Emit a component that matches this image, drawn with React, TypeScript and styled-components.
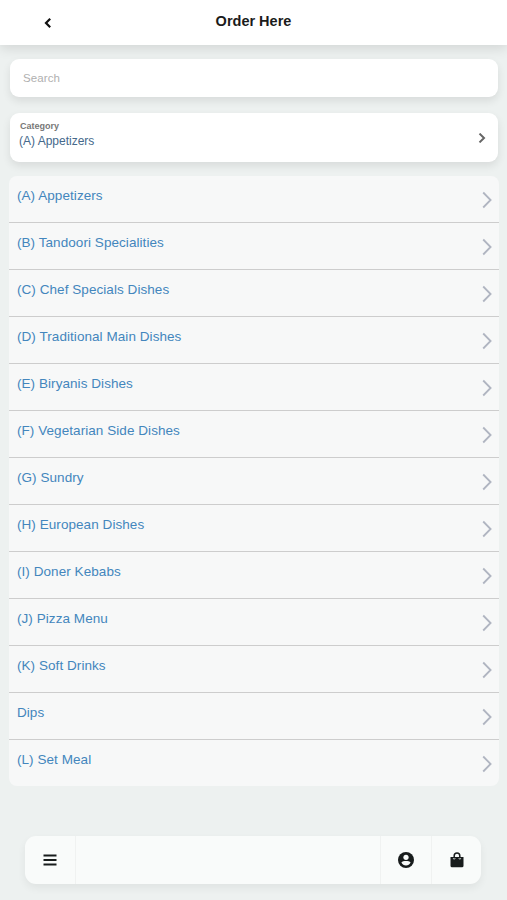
import React from "react";
import styled, { createGlobalStyle } from "styled-components";

const GlobalStyle = createGlobalStyle`
  * { box-sizing: border-box; }
  body {
    margin: 0;
    background: #edf1f0;
    font-family: "Liberation Sans", Arial, sans-serif;
  }
  button { font-family: inherit; border: 0; background: none; padding: 0; margin: 0; }
`;

const Page = styled.div`
  width: 100%;
  max-width: 507px;
  height: 900px;
  display: flex;
  flex-direction: column;
  overflow: hidden;
`;

const Header = styled.header`
  flex: none;
  height: 45px;
  display: grid;
  grid-template-columns: 96px 1fr 96px;
  align-items: center;
  background: #fff;
  box-shadow: 0 3px 12px rgba(0, 0, 0, 0.12);
`;

const BackButton = styled.button`
  display: flex;
  justify-content: center;
  color: #111;
`;

const Title = styled.h1`
  margin: 0;
  padding-bottom: 3px;
  text-align: center;
  font-size: 14.5px;
  line-height: 18px;
  color: #1b1b1b;
`;

const Content = styled.main`
  flex: 1;
  display: flex;
  flex-direction: column;
  padding: 14px 9px 0 10px;
`;

const SearchField = styled.input`
  flex: none;
  height: 38px;
  width: 100%;
  border: 0;
  border-radius: 9px;
  padding: 0 13px;
  background: #fff;
  box-shadow: 0 4px 8px rgba(0, 0, 0, 0.09);
  font-family: inherit;
  font-size: 11.5px;
  letter-spacing: 0.1px;
  outline: none;
  &::placeholder { color: #b0b0b0; opacity: 1; }
`;

const CategorySelect = styled.button`
  flex: none;
  height: 49px;
  margin-top: 16px;
  padding: 0 12px 0 9px;
  display: flex;
  align-items: center;
  justify-content: space-between;
  text-align: left;
  border-radius: 9px;
  background: #fff;
  box-shadow: 0 4px 8px rgba(0, 0, 0, 0.09);
  color: #666;
`;

const CategoryText = styled.span`
  display: flex;
  flex-direction: column;
  padding-bottom: 5px;
`;

const CategoryLabel = styled.span`
  padding-left: 1px;
  font-size: 9px;
  line-height: 12px;
  font-weight: bold;
  color: #777;
`;

const CategoryValue = styled.span`
  font-size: 12px;
  line-height: 18px;
  color: #45698b;
`;

const List = styled.ul`
  list-style: none;
  margin: 14px -1px 0;
  padding: 0;
  border-radius: 8px;
  background: #f7f8f8;
`;

const Item = styled.li`
  height: 47px;
  display: flex;
  align-items: flex-start;
  justify-content: space-between;
  padding: 10px 7px 0 8px;
  border-bottom: 1px solid #cdcdcd;
  &:last-child { height: 46px; border-bottom: 0; }
`;

const ItemName = styled.a`
  font-size: 13.5px;
  line-height: 19px;
  letter-spacing: 0.06px;
  color: #4386bd;
`;

const ItemArrow = styled.svg`
  flex: none;
  margin-top: 5px;
  color: #b0b5c1;
`;

const BottomBar = styled.nav`
  flex: none;
  height: 48px;
  margin: 0 26px 16px 25px;
  display: grid;
  grid-template-columns: 51px 1fr 51px 49px;
  border-radius: 11px;
  background: #f9fbfa;
  box-shadow: 0 4px 9px rgba(0, 0, 0, 0.06);
`;

const BarCell = styled.div<{ $divided?: boolean }>`
  display: flex;
  align-items: center;
  justify-content: center;
  color: #181c1c;
  border-right: ${({ $divided }) => ($divided ? "1px solid #f0f2f1" : "0")};
`;

const categories = [
  "(A) Appetizers",
  "(B) Tandoori Specialities",
  "(C) Chef Specials Dishes",
  "(D) Traditional Main Dishes",
  "(E) Biryanis Dishes",
  "(F) Vegetarian Side Dishes",
  "(G) Sundry",
  "(H) European Dishes",
  "(I) Doner Kebabs",
  "(J) Pizza Menu",
  "(K) Soft Drinks",
  "Dips",
  "(L) Set Meal",
];

const stroke = { fill: "none", stroke: "currentColor" };

export default function App() {
  return (
    <Page>
      <GlobalStyle />
      <Header>
        <BackButton aria-label="Back">
          <svg width="8" height="10" viewBox="0 0 8 10">
            <path d="M6.200 .8 2 5l4.200 4.200" {...stroke} strokeWidth="2.2" />
          </svg>
        </BackButton>
        <Title>Order Here</Title>
      </Header>
      <Content>
        <SearchField placeholder="Search" />
        <CategorySelect>
          <CategoryText>
            <CategoryLabel>Category</CategoryLabel>
            <CategoryValue>{categories[0]}</CategoryValue>
          </CategoryText>
          <svg width="8" height="10" viewBox="0 0 8 10">
            <path d="M1.500 .6 6 5 1.500 9.400" {...stroke} strokeWidth="2" />
          </svg>
        </CategorySelect>
        <List>
          {categories.map((name) => (
            <Item key={name}>
              <ItemName>{name}</ItemName>
              <ItemArrow width="10" height="18" viewBox="0 0 10 18">
                <path d="M1.2 1.5 8.6 9l-7.4 7.5" {...stroke} strokeWidth="1.8" />
              </ItemArrow>
            </Item>
          ))}
        </List>
      </Content>
      <BottomBar>
        <BarCell $divided>
          <svg width="14" height="12" viewBox="0 0 14 12">
            <path d="M.5 1.5h13M.5 6h13M.5 10.5h13" {...stroke} strokeWidth="2.1" />
          </svg>
        </BarCell>
        <BarCell $divided />
        <BarCell $divided>
          <svg width="16" height="16" viewBox="0 0 16 16">
            <circle cx="8" cy="8" r="8" fill="currentColor" />
            <circle cx="8" cy="5.3" r="2.6" fill="#f9fbfa" />
            <path d="M3.4 10.6c.8-1.2 2.8-1.6 4.6-1.6s3.8.4 4.6 1.6C11.7 12.5 10 13.5 8 13.5s-3.7-1-4.600-2.900z" fill="#f9fbfa" />
          </svg>
        </BarCell>
        <BarCell>
          <svg width="14" height="16" viewBox="0 0 14 16">
            <path d="M4.200 7V3.700a2.800 2.800 0 0 1 5.600 0V7" {...stroke} strokeWidth="1.5" />
            <path d="M.5 5h13v8.800a1.500 1.500 0 0 1-1.500 1.500H2A1.500 1.500 0 0 1 .5 13.800z" fill="currentColor" />
            <path d="M3.400 6v1h1.600V6M9 6v1h1.600V6" fill="none" stroke="#f9fbfa" strokeWidth=".6" />
          </svg>
        </BarCell>
      </BottomBar>
    </Page>
  );
}
